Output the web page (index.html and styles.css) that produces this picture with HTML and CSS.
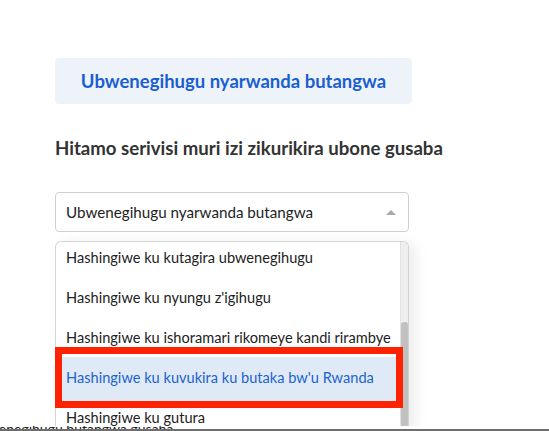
FILE: index.html
```html
<!DOCTYPE html>
<html lang="rw">
  <head>
    <meta charset="UTF-8" />
    <meta name="viewport" content="width=device-width, initial-scale=1.0" />
    <title>Ubwenegihugu</title>
    <link rel="stylesheet" href="styles.css">
  </head>
  <body>
    <div class="page">
      <div class="container">
        <div class="service-title">Ubwenegihugu nyarwanda butangwa</div>
        <h2 class="question">Hitamo serivisi muri izi zikurikira ubone gusaba</h2>

        <div class="select-wrap">
          <div class="select-box">
            <span>Ubwenegihugu nyarwanda butangwa</span>
            <span class="arrow"></span>
          </div>

          <div class="dropdown">
            <ul class="options">
              <li>Hashingiwe ku kutagira ubwenegihugu</li>
              <li>Hashingiwe ku nyungu z'igihugu</li>
              <li>Hashingiwe ku ishoramari rikomeye kandi rirambye</li>
              <li class="active">Hashingiwe ku kuvukira ku butaka bw'u Rwanda</li>
              <li>Hashingiwe ku gutura</li>
            </ul>
            <div class="scrollbar"><div class="thumb"></div></div>
            <div class="marker"></div>
          </div>
        </div>
      </div>

      <div class="under">
        <div class="under-text">Ubwenegihugu butangwa gusaba</div>
      </div>
    </div>
  </body>
</html>
```

FILE: styles.css
```css
body {
  margin: 0;
  font-family: Lato, "Open Sans", Arial, sans-serif;
  background-color: white;
  color: #222;
  overflow: hidden;
}
.page {
  height: 431px;
  display: flex;
  flex-direction: column;
  overflow: hidden;
}
.container {
  flex: 1;
  padding-top: 58px;
  padding-left: 55px;
}
.service-title {
  width: 357px;
  height: 46px;
  box-sizing: border-box;
  display: flex;
  align-items: center;
  justify-content: center;
  background-color: #eef3fa;
  border-radius: 4px;
  color: #1a5fd0;
  font-weight: bold;
  font-size: 18.5px;
}
.question {
  margin: 33px 0 0 0;
  font-size: 18.6px;
  font-weight: bold;
  color: #333;
}
.select-wrap {
  position: relative;
  width: 354px;
  margin-top: 33px;
}
.select-box {
  height: 40px;
  box-sizing: border-box;
  border: 1px solid #cfcfcf;
  border-radius: 4px;
  padding: 0 10px;
  display: flex;
  align-items: center;
  justify-content: space-between;
  font-size: 15.2px;
  color: #222;
}
.arrow {
  width: 0;
  height: 0;
  border-left: 5px solid transparent;
  border-right: 5px solid transparent;
  border-bottom: 5px solid #a8a8a8;
  margin-right: 2px;
}
.dropdown {
  position: absolute;
  top: 49px;
  left: 0;
  width: 354px;
  height: 190px;
  box-sizing: border-box;
  border: 1px solid #d4d4d4;
  border-bottom: none;
  border-radius: 6px 6px 0 0;
  background-color: white;
  box-shadow: 6px 2px 14px rgba(0, 0, 0, 0.08);
}
.options {
  list-style: none;
  margin: 0;
  padding: 0;
}
.options li {
  height: 40px;
  box-sizing: border-box;
  line-height: 32px;
  padding-left: 10px;
  margin-right: 7px;
  font-size: 14.6px;
  color: #222;
  white-space: nowrap;
}
.options li.active {
  background-color: #e0eaf7;
  color: #1a63d0;
  box-shadow: 0 -5px 0 #e0eaf7;
}
.scrollbar {
  position: absolute;
  top: 0;
  right: 0;
  width: 7px;
  height: 100%;
  background-color: #eeeeee;
  border-left: 1px solid #e2e2e2;
  border-radius: 0 6px 0 0;
}
.thumb {
  margin-top: 80px;
  height: 120px;
  background-color: #c1c1c1;
  border-radius: 3px 3px 0 0;
}
.marker {
  position: absolute;
  top: 105px;
  left: -1px;
  width: 348px;
  height: 61px;
  box-sizing: border-box;
  border: 7px solid #ff2200;
}
.under {
  position: relative;
  z-index: 1;
  height: 3px;
  overflow: hidden;
  background-color: white;
  border-bottom: 2px solid #6e6e6e;
}
.under-text {
  margin-left: -30px;
  margin-top: -4px;
  font-size: 14px;
  line-height: 14px;
  color: #222;
}
```
